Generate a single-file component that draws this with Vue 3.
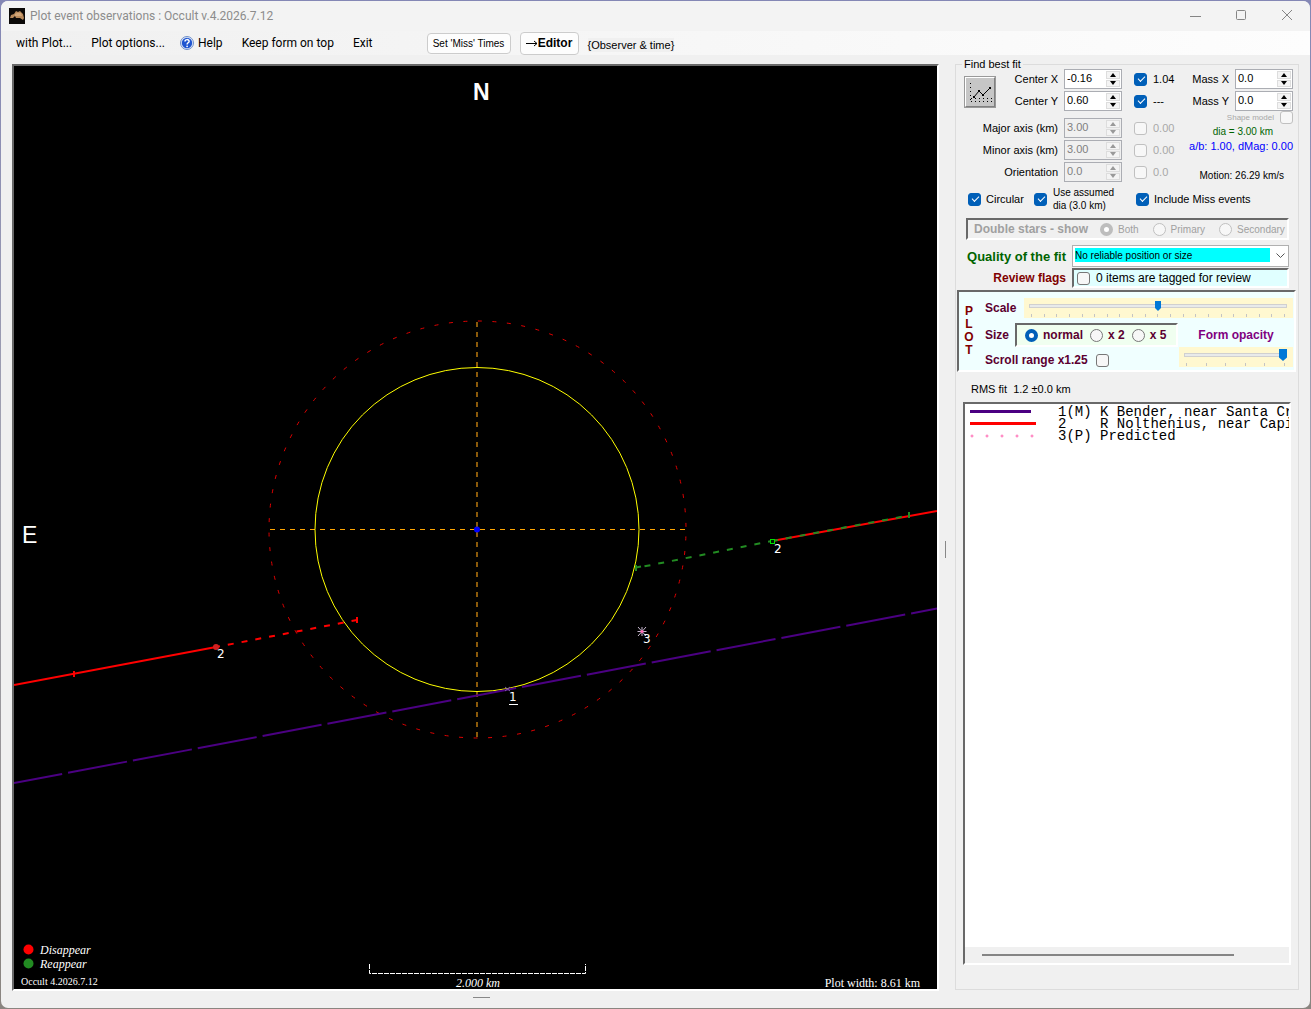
<script setup>
import { ref } from 'vue'

const menuLeft = ['with Plot...', 'Plot options...']
const menuRight = ['Keep form on top', 'Exit']

const fitRows = ref([
  { id: 'cx', label: 'Center X', value: '-0.16', sigma: '1.04', on: true, disabled: false },
  { id: 'cy', label: 'Center Y', value: '0.60', sigma: '---', on: true, disabled: false },
  { id: 'major', label: 'Major axis (km)', value: '3.00', sigma: '0.00', on: false, disabled: true },
  { id: 'minor', label: 'Minor axis (km)', value: '3.00', sigma: '0.00', on: false, disabled: true },
  { id: 'orient', label: 'Orientation', value: '0.0', sigma: '0.0', on: false, disabled: true }
])
const massRows = ref([
  { id: 'mx', label: 'Mass X', value: '0.0' },
  { id: 'my', label: 'Mass Y', value: '0.0' }
])
const stars = ['Both', 'Primary', 'Secondary']
const sizes = ['normal', 'x 2', 'x 5']
const size = ref('normal')
const scale = ref(50)
const opacity = ref(100)
const circular = ref(true)
const assumed = ref(true)
const includeMiss = ref(true)
const chords = [
  { kind: 'miss', text: '1(M) K Bender, near Santa Cr' },
  { kind: 'event', text: '2    R Nolthenius, near Capi' },
  { kind: 'predicted', text: '3(P) Predicted' }
]
</script>

<template>
  <div class="window">
    <header class="titlebar">
      <svg class="app-icon" viewBox="0 0 16 16" aria-hidden="true">
        <rect width="16" height="16" fill="#0b0908" />
        <path d="M1 10L2 7L5 6L7 3L9 4L11 3L14 6L15 10L14 12L11 10L7 10L6 8L4 10Z" fill="#b98a5c" />
        <path d="M6 6L8 5L12 5L13 8L9 8L6 8Z" fill="#d2a678" />
      </svg>
      <h1>Plot event observations : Occult v.4.2026.7.12</h1>
      <div class="caption-buttons">
        <button type="button" aria-label="Minimize">
          <svg viewBox="0 0 12 12"><path d="M1 6.5H12" /></svg>
        </button>
        <button type="button" aria-label="Maximize">
          <svg viewBox="0 0 12 12"><rect x="1.5" y="0.5" width="9" height="9" rx="1" /></svg>
        </button>
        <button type="button" aria-label="Close">
          <svg viewBox="0 0 12 12"><path d="M1 0L11 10M11 0L1 10" /></svg>
        </button>
      </div>
    </header>

    <nav class="menubar">
      <button v-for="m in menuLeft" :key="m" type="button" class="menu">{{ m }}</button>
      <button type="button" class="menu help">
        <svg viewBox="0 0 14 14" aria-hidden="true">
          <circle cx="7" cy="7" r="6.5" fill="#dfe8f8" stroke="#6f8fc9" />
          <circle cx="7" cy="7" r="5.2" fill="#2056d0" />
          <path d="M5 5.6C5 3 9.2 3 9.1 5.4C9 6.8 7.1 6.8 7.1 8.4" fill="none" stroke="#fff" stroke-width="1.5" />
          <circle cx="7.1" cy="10.3" r="0.9" fill="#fff" />
        </svg>
        Help
      </button>
      <button v-for="m in menuRight" :key="m" type="button" class="menu">{{ m }}</button>
      <div class="tools">
        <button type="button" class="tool miss">Set 'Miss' Times</button>
        <button type="button" class="tool editor">
          <svg viewBox="0 0 12 8" aria-hidden="true"><path d="M0 4.500H11M8 2L11 4.500L8 7" /></svg>Editor
        </button>
        <span class="hint">{Observer &amp; time}</span>
      </div>
    </nav>

    <main class="body">
      <div class="plot">
        <svg viewBox="-463 -463 923 923" role="img" aria-label="Occultation chord plot">
          <g fill="none">
            <path class="axis-v" d="M0 -207V209" />
            <path class="axis-h" d="M-207 0.5H209" />
            <circle class="outer" cx="0.5" cy="0.5" r="208.5" />
            <circle class="ellipse" cx="0" cy="0.5" r="162" />
            <path class="miss-line" d="M-463 254L460 79.500" />
            <path class="red" d="M-463 156L-261 118" />
            <path class="red dash" d="M-261 118L-120 91" />
            <path class="red" d="M-403 142V148M-120 88V94" />
            <path class="red" d="M295 12L460 -18" />
            <path class="green dash" d="M295 12L159 39" />
            <path class="green mixed" d="M295 12L432 -13.500" />
            <path class="green" d="M432 -17V-11M159 36V42M159 38.500L164 37.500" />
            <path class="mark" d="M28 158L33 162M33 158L28 162" />
            <path class="star" d="M165 98V107M160.500 102.500H169.500M161 98L169 107M169 98L161 107" />
            <path class="scale" d="M-107.500 435V444.500H108.500V435" />
          </g>
          <circle cx="-261" cy="118" r="3" fill="#d02020" />
          <rect x="293.500" y="10.500" width="4" height="4" fill="#001800" stroke="#00e000" />
          <circle cx="0" cy="0.5" r="3" fill="#0000ff" />
          <circle cx="165" cy="102.500" r="1.500" fill="#ff69b4" />
          <g class="tags">
            <text x="-260" y="129">2</text>
            <text x="297" y="24">2</text>
            <text x="166" y="114">3</text>
            <text x="32" y="172">1</text>
          </g>
          <path d="M32 175.500H41" stroke="#fff" />
          <text class="compass north" x="-4" y="-429">N</text>
          <text class="compass" x="-455" y="14">E</text>
          <circle cx="-448.500" cy="420.500" r="5" fill="#ff0000" />
          <circle cx="-448.500" cy="434.500" r="5" fill="#228b22" />
          <g class="serif">
            <text class="slant" x="-437" y="425">Disappear</text>
            <text class="slant" x="-437" y="439">Reappear</text>
            <text class="small" x="-456" y="456">Occult 4.2026.7.12</text>
            <text class="slant" x="1" y="458" text-anchor="middle">2.000 km</text>
            <text x="443" y="458" text-anchor="end">Plot width: 8.61 km</text>
          </g>
        </svg>
      </div>

      <div class="splitter"><i></i></div>

      <fieldset class="panel">
        <legend>Find best fit</legend>

        <div class="fit">
          <div class="fit-left">
            <button type="button" class="fit-button" aria-label="Find best fit">
              <svg viewBox="0 0 24 24" shape-rendering="crispEdges">
                <path d="M2.500 3V21" stroke="#000" stroke-dasharray="1 3" fill="none" />
                <path d="M3 18.500H24M3 21.500H24" stroke="#000" stroke-dasharray="1 3" fill="none" />
                <path d="M6 17L11 11L15 15L22 8" stroke="#000" fill="none" shape-rendering="auto" />
                <path d="M5 16h2v2h-2zM10 10h2v2h-2zM14 14h2v2h-2zM21 7h2v2h-2z" />
              </svg>
            </button>
            <template v-for="r in fitRows" :key="r.id">
              <span v-if="r.id === 'major'" class="gap"></span>
              <label class="name" :class="{ long: r.disabled }" :for="r.id">{{ r.label }}</label>
              <span class="spin" :class="{ off: r.disabled }">
                <input :id="r.id" v-model="r.value" type="text" :disabled="r.disabled" />
                <span class="arrows">
                  <button type="button" :aria-label="r.label + ' up'" :disabled="r.disabled"><i class="up"></i></button>
                  <button type="button" :aria-label="r.label + ' down'" :disabled="r.disabled"><i class="down"></i></button>
                </span>
              </span>
              <label class="check sigma" :class="{ off: r.disabled }">
                <input v-model="r.on" type="checkbox" :disabled="r.disabled" />{{ r.sigma }}
              </label>
            </template>
          </div>

          <div class="fit-right">
            <div v-for="r in massRows" :key="r.id" class="mass">
              <label :for="r.id">{{ r.label }}</label>
              <span class="spin">
                <input :id="r.id" v-model="r.value" type="text" />
                <span class="arrows">
                  <button type="button" :aria-label="r.label + ' up'"><i class="up"></i></button>
                  <button type="button" :aria-label="r.label + ' down'"><i class="down"></i></button>
                </span>
              </span>
            </div>
            <label class="check shape off">Shape model<input type="checkbox" disabled /></label>
            <p class="dia">dia = 3.00 km</p>
            <p class="ratio">a/b: 1.00, dMag: 0.00</p>
            <p class="motion">Motion: 26.29 km/s</p>
          </div>
        </div>

        <div class="options">
          <label class="check"><input v-model="circular" type="checkbox" />Circular</label>
          <label class="check two"><input v-model="assumed" type="checkbox" /><span>Use assumed<br />dia (3.0 km)</span></label>
          <label class="check wide"><input v-model="includeMiss" type="checkbox" />Include Miss events</label>
        </div>

        <div class="stars sunken">
          <strong>Double stars - show</strong>
          <label v-for="(s, i) in stars" :key="s" class="check">
            <input type="radio" name="stars" disabled :checked="i === 0" />{{ s }}
          </label>
        </div>

        <div class="row">
          <label class="bold quality" for="quality">Quality of the fit</label>
          <select id="quality"><option>No reliable position or size</option></select>
        </div>
        <div class="row">
          <span class="bold flags">Review flags</span>
          <label class="check review sunken"><input type="checkbox" />0 items are tagged for review</label>
        </div>

        <div class="plot-box sunken">
          <div class="letters"><span v-for="c in 'PLOT'" :key="c">{{ c }}</span></div>
          <div class="plot-body">
            <div class="scale-row">
              <label class="bold" for="scale">Scale</label>
              <div class="slider">
                <input id="scale" v-model="scale" type="range" min="0" max="100" />
                <div class="ticks"><i v-for="n in 21" :key="n"></i></div>
              </div>
            </div>
            <div class="plot-lower">
              <div class="plot-left">
                <div class="size-row">
                  <span class="bold">Size</span>
                  <div class="sizes sunken">
                    <label v-for="s in sizes" :key="s" class="check">
                      <input v-model="size" type="radio" name="size" :value="s" />{{ s }}
                    </label>
                  </div>
                </div>
                <label class="check scroll">Scroll range x1.25<input type="checkbox" /></label>
              </div>
              <div class="plot-right">
                <label class="bold" for="opacity">Form opacity</label>
                <div class="slider big">
                  <input id="opacity" v-model="opacity" type="range" min="0" max="100" />
                  <div class="ticks"><i v-for="n in 6" :key="n"></i></div>
                </div>
              </div>
            </div>
          </div>
        </div>

        <p class="rms">RMS fit&nbsp; 1.2 ±0.0 km</p>

        <div class="list sunken">
          <ul>
            <li v-for="c in chords" :key="c.kind">
              <svg viewBox="0 0 66 12" aria-hidden="true">
                <path v-if="c.kind === 'miss'" d="M0 5.500H61" stroke="#4b0082" stroke-width="3" />
                <path v-else-if="c.kind === 'event'" d="M0 5.500H66" stroke="#ff0000" stroke-width="3" />
                <g v-else fill="none" stroke="#ff69b4">
                  <circle v-for="n in 5" :key="n" :cx="n * 15 - 13" cy="6" r="1" />
                </g>
              </svg>
              <span>{{ c.text }}</span>
            </li>
          </ul>
          <div class="scrollbar"><i></i></div>
        </div>
      </fieldset>
    </main>
    <footer class="grip"><i></i></footer>
  </div>
</template>

<style>
body {
  margin: 0;
  background: linear-gradient(#8487b5, #a5a5b0 50%, #8a8580);
}
</style>

<style scoped>
* {
  box-sizing: border-box;
}
.window {
  display: flex;
  flex-direction: column;
  min-height: 100vh;
  border: 1px solid transparent;
  border-radius: 8px;
  background: #f0f0f0 padding-box;
  font-family: "Liberation Sans", Arial, sans-serif;
  font-size: 11px;
  color: #000;
  overflow: hidden;
}
button, input, select {
  font: inherit;
  color: inherit;
  margin: 0;
  padding: 0;
}
button {
  border: 0;
  background: none;
}
p, h1, ul {
  margin: 0;
  padding: 0;
}
.sunken {
  border: 2px solid;
  border-color: #696969 #fff #fff #696969;
}

.titlebar {
  display: flex;
  align-items: center;
  height: 30px;
  padding-left: 8px;
  background: #f3f3f3;
}
.app-icon {
  width: 16px;
  height: 16px;
}
.titlebar h1 {
  margin-left: 5px;
  font: 12px Roboto, "Noto Sans", sans-serif;
  color: #8c8c8c;
}
.caption-buttons {
  display: flex;
  margin-left: auto;
}
.caption-buttons button {
  display: flex;
  align-items: center;
  justify-content: center;
  width: 46px;
  height: 28px;
}
.caption-buttons svg {
  width: 12px;
  height: 12px;
  fill: none;
  stroke: #858585;
}

.menubar {
  display: flex;
  align-items: center;
  height: 24px;
  padding-left: 15px;
  background: linear-gradient(90deg, #f0f0f0, #fdfdfd);
}
.menu {
  display: flex;
  align-items: center;
  gap: 4px;
  margin-right: 19px;
  font: 12px Roboto, "Noto Sans", sans-serif;
  white-space: nowrap;
}
.menu.help {
  margin-left: -4px;
}
.menu svg {
  width: 14px;
  height: 14px;
}
.tools {
  display: flex;
  align-items: center;
  gap: 9px;
  margin-left: 35px;
}
.tool {
  display: flex;
  align-items: center;
  justify-content: center;
  border: 1px solid #ccc;
  border-radius: 4px;
  background: #fdfdfd;
  white-space: nowrap;
}
.miss {
  width: 84px;
  height: 21px;
  font-size: 10px;
}
.editor {
  width: 59px;
  height: 23px;
  font-size: 12px;
  font-weight: bold;
}
.editor svg {
  width: 12px;
  height: 8px;
  fill: none;
  stroke: #000;
}
.hint {
  line-height: 14px;
  margin-top: 4px;
  background: #f0f0f0;
}

.body {
  display: grid;
  grid-template-columns: minmax(0, 1fr) 16px 344px;
  padding: 0 11px;
}
.plot {
  align-self: start;
  margin-top: 9px;
  border: 2px solid;
  border-color: #696969 #fff #fff #696969;
  background: #000;
}
.plot svg {
  display: block;
  width: 100%;
}
.axis-v { stroke: #8b5a0a; stroke-width: 2; stroke-dasharray: 5 5; }
.axis-h { stroke: #ffa500; stroke-dasharray: 5 5; }
.outer { stroke: #e00000; stroke-dasharray: 4 10.560; stroke-dashoffset: -7; }
.ellipse { stroke: #ffff00; }
.miss-line { stroke: #4b0082; stroke-width: 2; stroke-dasharray: 60 6; stroke-dashoffset: 11; }
.red { stroke: #ff0000; stroke-width: 2; }
.green { stroke: #228b22; stroke-width: 2; }
.dash { stroke-dasharray: 6 8; stroke-dashoffset: 2; }
.mixed { stroke-dasharray: 6 8; }
.mark { stroke: #8060a0; }
.star { stroke: #c8b8d0; }
.scale { stroke: #fff; stroke-dasharray: 5 1; }
.tags { fill: #fff; font: 12px "DejaVu Sans", sans-serif; }
.compass { fill: #fff; font-size: 23px; }
.north { font-weight: bold; }
.serif { fill: #fff; font: 12px "Liberation Serif", "Times New Roman", serif; }
.slant { font-style: italic; }
.small { font-size: 10px; }

.splitter {
  display: flex;
  align-items: center;
  justify-content: center;
  padding: 52px 3px 0 0;
}
.splitter i {
  width: 1px;
  height: 17px;
  background: #888;
}
.grip {
  display: flex;
  padding: 6px 372px 0 0;
  justify-content: center;
  margin-left: 24px;
}
.grip i {
  width: 17px;
  height: 1px;
  background: #888;
}

.panel {
  display: flex;
  flex-direction: column;
  min-width: 0;
  margin: 5px 0 1px;
  padding: 1px 0 24px;
  border: 1px solid #dcdcdc;
}
.panel legend {
  margin-left: 6px;
  padding: 0 2px;
  line-height: 8px;
}
.fit {
  display: flex;
  justify-content: space-between;
  padding: 0 5px 0 8px;
}
.fit-left {
  display: grid;
  grid-template-columns: 32px 56px 58px auto;
  grid-template-rows: 20px 20px 3px 20px 20px 20px;
  column-gap: 6px;
  row-gap: 2px;
  align-items: center;
}
.fit-left > .fit-button {
  grid-area: 1 / 1 / 3 / 2;
}
.fit-left > .name {
  grid-column: 2;
  text-align: right;
  white-space: nowrap;
}
.fit-left > .name.long {
  grid-column: 1 / 3;
}
.fit-left > .gap {
  grid-column: 1 / -1;
}
.fit-button {
  width: 32px;
  height: 32px;
  margin-top: 4px;
  border: 2px solid;
  border-color: #fff #808080 #808080 #fff;
  outline: 1px solid #999;
  outline-offset: -1px;
  background: #c6c6c6;
}
.fit-button svg {
  display: block;
  width: 24px;
  height: 24px;
  margin: 2px;
}
.spin {
  display: flex;
  width: 58px;
  height: 20px;
  border: 1px solid #abadb3;
  background: #fff;
}
.spin > input {
  flex: 1;
  min-width: 0;
  padding: 0 0 2px 2px;
  border: 0;
  background: none;
}
.arrows {
  display: flex;
  flex-direction: column;
  gap: 1px;
  width: 15px;
  padding: 1px 1px 1px 0;
}
.arrows button {
  display: flex;
  flex: 1;
  align-items: center;
  justify-content: center;
  border: 1px solid #ddd;
  background: #f4f4f4;
}
.arrows i {
  border: 3px solid transparent;
}
.arrows .up {
  border-top: 0;
  border-bottom: 4px solid #000;
}
.arrows .down {
  border-bottom: 0;
  border-top: 4px solid #000;
}
.spin.off {
  background: #f0f0f0;
  color: #808080;
}
.off .arrows .up { border-bottom-color: #999; }
.off .arrows .down { border-top-color: #999; }

.check {
  display: flex;
  align-items: center;
  gap: 6px;
  white-space: nowrap;
}
.check.off {
  color: #a8a8a8;
}
.check input {
  appearance: none;
  position: relative;
  flex: none;
  width: 13px;
  height: 13px;
  border: 1px solid #777;
  border-radius: 3px;
  background: #f7f7f7;
}
.check input:disabled {
  border-color: #c0c0c0;
}
.check input[type="checkbox"]:checked {
  border-color: #005fb8;
  background: #005fb8;
}
.check input[type="checkbox"]:checked::after {
  content: "";
  position: absolute;
  left: 3px;
  top: 2px;
  width: 6px;
  height: 3px;
  border: solid #fff;
  border-width: 0 0 1px 1px;
  transform: rotate(-45deg);
}
.check input[type="radio"] {
  border-radius: 50%;
}
.check input[type="radio"]:checked {
  border: 4px solid #005fb8;
  background: #fff;
}
.check input[type="radio"]:checked:disabled {
  border-color: #bdbdbd;
}
.sigma {
  margin-left: 6px;
}
.fit-right {
  display: flex;
  flex-direction: column;
  align-items: flex-end;
}
.mass {
  display: flex;
  align-items: center;
  gap: 6px;
  margin-bottom: 2px;
}
.fit-right .shape {
  height: 13px;
  margin: -2px 0 1px;
  font-size: 8px;
}
.fit-right p {
  font-size: 10px;
  line-height: 14px;
}
.fit-right .dia {
  margin-right: 20px;
  color: #006400;
}
.fit-right .ratio {
  font-size: 11px;
  color: #0000ff;
}
.fit-right .motion {
  margin: 16px 9px 0 0;
}

.options {
  display: grid;
  grid-template-columns: 66px 102px auto;
  align-items: center;
  margin-top: 3px;
  padding-left: 12px;
}
.options .check {
  gap: 5px;
}
.options .two {
  gap: 6px;
  font-size: 10px;
  line-height: 13px;
}
.stars {
  display: flex;
  align-items: center;
  height: 22px;
  margin: 6px 9px 5px 10px;
  padding-left: 6px;
  color: #a0a0a0;
}
.stars strong {
  flex: none;
  width: 126px;
  font-size: 12px;
}
.stars .check {
  gap: 5px;
  margin-right: 14px;
  font-size: 10px;
}
.stars .check:last-child {
  margin-right: 0;
}
.row {
  display: grid;
  grid-template-columns: 110px 217px;
  column-gap: 6px;
  align-items: center;
  margin-bottom: 1px;
}
.bold {
  font-size: 12px;
  font-weight: bold;
  white-space: nowrap;
  color: #5c0030;
}
.row .bold {
  text-align: right;
}
.row .quality {
  font-size: 13px;
  color: #006400;
}
.row .flags {
  color: #800000;
}
select {
  appearance: none;
  height: 22px;
  padding: 2px 18px 4px 2px;
  border: 1px solid #b0b0b0;
  border-radius: 0;
  font-size: 10px;
  background:
    url("data:image/svg+xml,%3Csvg xmlns='http://www.w3.org/2000/svg' width='9' height='6' fill='none' stroke='%23555'%3E%3Cpath d='M.5.5l4 4 4-4'/%3E%3C/svg%3E") no-repeat right 4px center border-box,
    linear-gradient(#00ffff, #00ffff) no-repeat content-box content-box,
    #fff;
}
.review {
  height: 20px;
  padding-left: 3px;
  background: #e0ffff;
  font-size: 12px;
}

.plot-box {
  display: flex;
  margin: 1px 2px 0 1px;
  padding-bottom: 3px;
  background: #f0ffff;
}
.letters {
  display: flex;
  flex-direction: column;
  align-items: center;
  width: 20px;
  padding-top: 13px;
  font-size: 12px;
  font-weight: bold;
  line-height: 13px;
  color: #800000;
}
.plot-body {
  flex: 1;
  padding: 6px 1px 0 6px;
}
.scale-row {
  display: flex;
  align-items: center;
}
.scale-row .bold {
  width: 39px;
}
.slider {
  flex: 1;
  height: 20px;
  padding: 2px 6px 0 5px;
  background: #fff8d0;
}
.slider input {
  appearance: none;
  display: block;
  width: 100%;
  height: 12px;
  background:
    linear-gradient(#e8eaea, #e8eaea) no-repeat center / calc(100% - 2px) 2px,
    linear-gradient(#d0d0d0, #d0d0d0) no-repeat center / 100% 4px;
}
.slider input::-webkit-slider-thumb {
  appearance: none;
  width: 6px;
  height: 10px;
  background: #0078d7;
  clip-path: polygon(0 0, 100% 0, 100% 70%, 50% 100%, 0 70%);
}
.slider.big input::-webkit-slider-thumb {
  width: 8px;
  height: 12px;
}
.ticks {
  display: flex;
  justify-content: space-between;
  padding: 2px 2px 0;
}
.ticks i {
  width: 1px;
  height: 3px;
  background: #c4c4c4;
}
.plot-lower {
  display: flex;
  margin-top: 5px;
}
.plot-left {
  width: 194px;
}
.size-row {
  display: flex;
  align-items: center;
}
.size-row .bold {
  width: 30px;
}
.sizes {
  display: flex;
  gap: 7px;
  flex: 1;
  height: 24px;
  margin-right: 1px;
  padding-left: 8px;
  background: #f0fff0;
}
.sizes .check, .scroll {
  gap: 5px;
  font-size: 12px;
  font-weight: bold;
  color: #5c0030;
}
.scroll {
  width: fit-content;
  margin-top: 6px;
}
.scroll.check {
  gap: 8px;
}
.plot-right {
  display: flex;
  flex: 1;
  flex-direction: column;
  align-items: center;
}
.plot-right .bold {
  line-height: 24px;
  color: #800080;
}
.plot-right .slider {
  align-self: stretch;
  flex: none;
}

.rms {
  margin: 10px 0 6px 15px;
  line-height: 14px;
}
.list {
  display: flex;
  flex: 1;
  flex-direction: column;
  margin: 0 7px;
  background: #fff;
  overflow: hidden;
}
.list ul {
  flex: 1;
  padding-top: 2px;
  list-style: none;
}
.list li {
  display: flex;
  gap: 22px;
  height: 12px;
  padding-left: 5px;
  font: 14px/12px "Liberation Mono", "Courier New", monospace;
  white-space: pre;
}
.list li svg {
  flex: none;
  width: 66px;
  height: 12px;
}
.scrollbar {
  display: flex;
  align-items: center;
  height: 16px;
  padding-left: 17px;
  background: #f0f0f0;
}
.scrollbar i {
  width: 82%;
  height: 2px;
  background: #858585;
}
</style>
